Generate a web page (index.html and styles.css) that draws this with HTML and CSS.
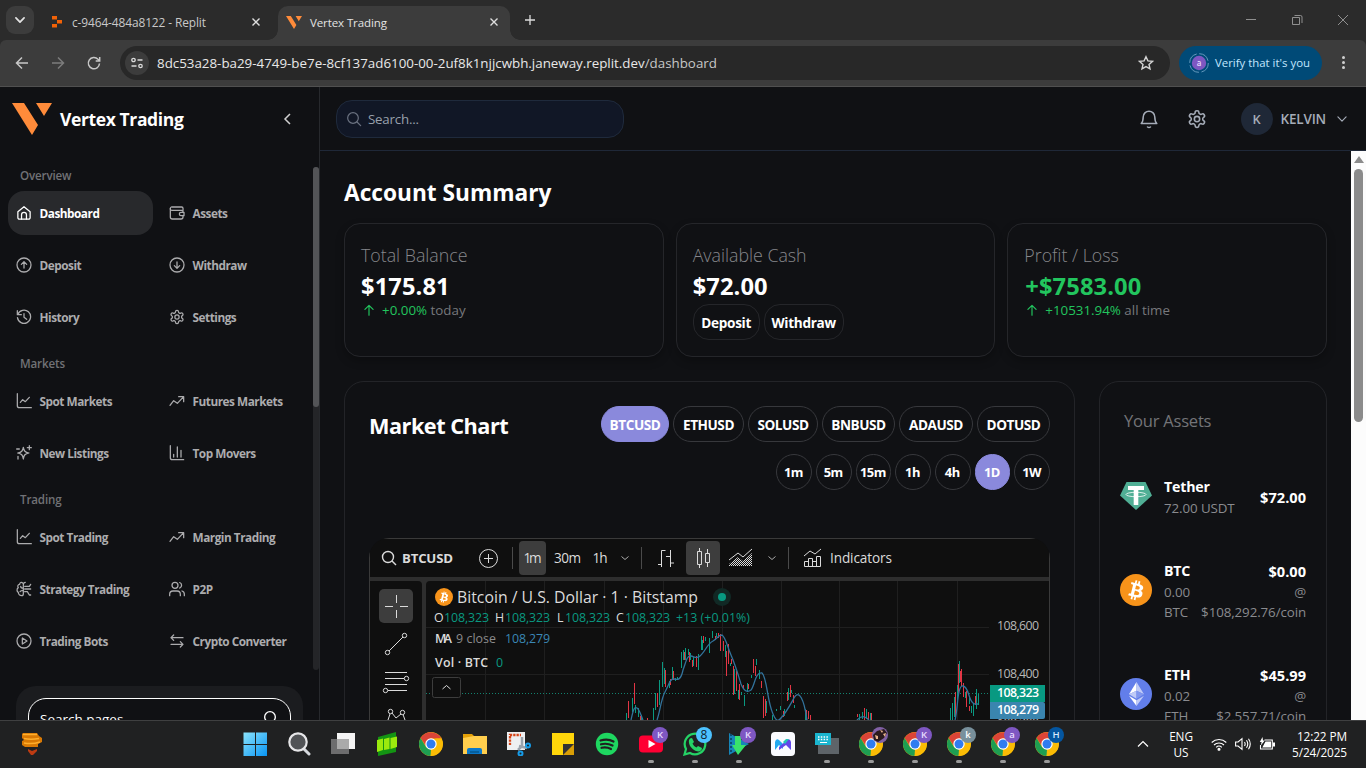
FILE: index.html
```html
<!DOCTYPE html>
<html lang="en">
<head>
<meta charset="utf-8">
<title>Vertex Trading</title>
<link rel="stylesheet" href="styles.css">
</head>
<body>
<svg class="defs" width="0" height="0">
  <defs><pattern id="dots" width="2" height="2" patternUnits="userSpaceOnUse"><path fill="#dbdbdb" d="M0 0h1v1H0zM1 1h1v1H1z"/></pattern></defs>
  <symbol id="home" viewBox="0 0 24 24"><path d="M2.800 10.200 12 2.500l9.200 7.700V19a2.300 2.300 0 0 1-2.300 2.300H5.100A2.300 2.300 0 0 1 2.800 19z"/><path d="M8.300 21v-6.200a3.700 3.700 0 0 1 7.400 0V21"/></symbol>
  <symbol id="wallet" viewBox="0 0 24 24"><path d="M21 8V5a2 2 0 0 0-2-2H4.500A2.200 2.200 0 0 0 2 5.200V18a3 3 0 0 0 3 3h13a3 3 0 0 0 3-3v-2"/><path d="M2 5.500A2.300 2.300 0 0 0 4.500 8H19a2 2 0 0 1 2 2v1"/><path d="M22.500 11H18a2.500 2.500 0 0 0 0 5h4.500z"/></symbol>
  <symbol id="up-circle" viewBox="0 0 24 24"><circle cx="12" cy="12" r="10.500"/><path d="M12 16.500v-9M8 11l4-4 4 4"/></symbol>
  <symbol id="down-circle" viewBox="0 0 24 24"><circle cx="12" cy="12" r="10.500"/><path d="M12 7.500v9M8 13l4 4 4-4"/></symbol>
  <symbol id="history" viewBox="0 0 24 24"><path d="M2 2.500v6h6"/><path d="M2.800 8A9.900 9.900 0 1 1 2.200 13"/><path d="M12 7v5.500l4 3"/></symbol>
  <symbol id="gear" viewBox="0 0 24 24"><path d="M12.220 2h-.44a2 2 0 0 0-2 2v.18a2 2 0 0 1-1 1.730l-.43.25a2 2 0 0 1-2 0l-.15-.08a2 2 0 0 0-2.730.73l-.22.38a2 2 0 0 0 .73 2.730l.15.1a2 2 0 0 1 1 1.720v.51a2 2 0 0 1-1 1.740l-.15.09a2 2 0 0 0-.73 2.730l.22.38a2 2 0 0 0 2.730.73l.15-.08a2 2 0 0 1 2 0l.43.25a2 2 0 0 1 1 1.730V20a2 2 0 0 0 2 2h.44a2 2 0 0 0 2-2v-.18a2 2 0 0 1 1-1.730l.43-.25a2 2 0 0 1 2 0l.15.08a2 2 0 0 0 2.730-.73l.22-.39a2 2 0 0 0-.73-2.730l-.15-.08a2 2 0 0 1-1-1.740v-.5a2 2 0 0 1 1-1.740l.15-.09a2 2 0 0 0 .73-2.730l-.22-.38a2 2 0 0 0-2.730-.73l-.15.08a2 2 0 0 1-2 0l-.43-.25a2 2 0 0 1-1-1.730V4a2 2 0 0 0-2-2z"/><circle cx="12" cy="12" r="3.200"/></symbol>
  <symbol id="line-chart" viewBox="0 0 24 24"><path d="M2 1v18a3 3 0 0 0 3 3h18M6.500 14l3.500-4 4 3 6-6.500"/></symbol>
  <symbol id="trend" viewBox="0 0 24 24"><path d="M1.500 18.500 7 11.500l5.500 4L22 5.500M14.500 5.500H22V13"/></symbol>
  <symbol id="sparkle" viewBox="0 0 24 24"><path d="M11 3.500c.9 5.500 2.500 7.400 8.500 8.500-6 1.100-7.600 3-8.500 9-.9-6-2.500-7.900-8.500-9 6-1.100 7.600-3 8.500-8.500zM20 1v6M17 4h6M3 17v4M1 6h4"/></symbol>
  <symbol id="bars" viewBox="0 0 24 24"><path d="M2 1v18a3 3 0 0 0 3 3h17M7 14v4M12.500 3v15M18 8v10"/></symbol>
  <symbol id="brain" viewBox="0 0 24 24"><path d="M10 3C8 .8 5.500 2.500 5.500 5 2.500 5 2 8.500 3.500 10 .8 11.500 1 16 3.500 17c0 3 2.500 5 5 5 2 0 2.500-1.500 2.500-3V6c0-2 1-4 3-4M7 8c0 2 1.500 3 4 3M6 16c1-2 3-2 5-2M13 8h7l2-3M13 12h9M13 16h4l3 5h2"/></symbol>
  <symbol id="users" viewBox="0 0 24 24"><circle cx="9" cy="6.500" r="4.500"/><path d="M1 22v-2a5 5 0 0 1 5-5h6a5 5 0 0 1 5 5v2M16 2.300a4.500 4.500 0 0 1 0 8.400M19.500 15a5 5 0 0 1 3.500 5v2"/></symbol>
  <symbol id="play-circle" viewBox="0 0 24 24"><circle cx="12" cy="12" r="10.500"/><path d="M9.500 7.500v9l7-4.500z"/></symbol>
  <symbol id="swap" viewBox="0 0 24 24"><path d="M21 7H3M7 3 3 7l4 4M3 17h18M17 13l4 4-4 4"/></symbol>
  <symbol id="search" viewBox="0 0 24 24"><circle cx="10.500" cy="10.500" r="8"/><path d="m16.500 16.500 5.500 5.500"/></symbol>
  <symbol id="chev-down" viewBox="0 0 24 24"><path d="m5 8.500 7 7 7-7"/></symbol>
  <symbol id="arrow-up" viewBox="0 0 24 24"><path d="M12 21V4M5 11l7-7 7 7"/></symbol>
  <symbol id="vertex" viewBox="0 0 40 32"><path fill="#ff8b3a" d="M0 0h12l14 22-6 10zM24 0h16l-8 13z"/></symbol>
  <symbol id="bitcoin" viewBox="0 0 32 32"><circle cx="16" cy="16" r="16" fill="#f7931a"/><path fill="#fff" fill-rule="evenodd" d="M23.200 14.200c.3-2.100-1.300-3.200-3.500-4l.7-2.800-1.700-.4-.7 2.700-1.400-.3.700-2.800-1.700-.4-.7 2.800-3.400-.9-.5 1.900s1.300.3 1.200.3c.7.2.8.6.8 1l-2 7.900c-.1.200-.3.500-.8.400l-1.200-.3-.9 2 3.200.8-.7 2.900 1.700.4.7-2.800 1.400.4-.7 2.800 1.700.4.7-2.900c3 .6 5.200.3 6.100-2.300.8-2.200 0-3.400-1.600-4.200 1.100-.3 2-1 2.600-2.600zm-4 5.600c-.5 2.200-4.200 1-5.300.7l1-3.800c1.200.3 5 .9 4.300 3.100zm.5-5.600c-.5 2-3.500 1-4.500.7l.9-3.400c1 .2 4.200.7 3.600 2.700z"/></symbol>
  <symbol id="chrome" viewBox="0 0 24 24"><circle cx="12" cy="12" r="12" fill="#fbbc05"/><path fill="#db4437" d="M1.600 6A12 12 0 0 1 22.400 6.500H12L7 14z"/><path fill="#1e9e52" d="M1.600 6 7 15l5 2.500L11.500 24A12 12 0 0 1 1.600 6z"/><path fill="#fbbc05" d="M22.400 6.500A12 12 0 0 1 11.500 24L17 14l-.5-7.500z"/><circle cx="12" cy="12" r="5.700" fill="#fff"/><circle cx="12" cy="12" r="4.500" fill="#2f7cf0"/></symbol>
</svg>

<div class="window">
  <header class="tabstrip">
    <div class="tab-menu"><svg class="ico s14 w3"><use href="#chev-down"/></svg></div>
    <div class="tab">
      <svg class="fav" viewBox="0 0 12 12"><path fill="#f26207" d="M1 0h5v3.500H1zM6 4h5v3.500H6zM1 8h5v3.500H1z"/></svg>
      <span class="tab-title">c-9464-484a8122 - Replit</span><svg class="tab-x" viewBox="0 0 10 10"><path d="M1.500 1.500l7 7M8.500 1.500l-7 7"/></svg>
    </div>
    <div class="tab active">
      <svg class="fav vfav"><use href="#vertex"/></svg>
      <span class="tab-title">Vertex Trading</span><svg class="tab-x" viewBox="0 0 10 10"><path d="M1.500 1.500l7 7M8.500 1.500l-7 7"/></svg>
    </div>
    <svg class="new-tab" viewBox="0 0 12 12"><path d="M6 1v10M1 6h10"/></svg>
    <div class="win-controls">
      <svg viewBox="0 0 12 12"><path d="M1 5.500h10"/></svg>
      <svg viewBox="0 0 12 12"><path d="M1.500 3.500h7v7h-7zM3.500 1.500h6a1.500 1.500 0 0 1 1.500 1.500v6"/></svg>
      <svg viewBox="0 0 12 12"><path d="M1 1l10 10M11 1 1 11"/></svg>
    </div>
  </header>

  <div class="toolbar-bed">
  <div class="toolbar">
    <svg class="tb-ico" viewBox="0 0 16 16"><path d="M14 8H2.500M8 2.500 2.500 8 8 13.500"/></svg>
    <svg class="tb-ico dim" viewBox="0 0 16 16"><path d="M2 8h11.500M8 2.500 13.500 8 8 13.500"/></svg>
    <svg class="tb-ico" viewBox="0 0 16 16"><path d="M13.500 8.500A5.600 5.600 0 1 1 12 4.300l1.500 1.500M13.700 2v4h-4"/></svg>
    <div class="omnibox">
      <div class="site"><svg viewBox="0 0 14 14"><circle cx="3.500" cy="4" r="1.700"/><path d="M7.500 4h5M1.500 10h5"/><circle cx="10.500" cy="10" r="1.700"/></svg></div>
      <span class="url">8dc53a28-ba29-4749-be7e-8cf137ad6100-00-2uf8k1njjcwbh.janeway.replit.dev<i>/dashboard</i></span>
      <svg class="star" viewBox="0 0 16 16"><path d="m8 1.700 1.900 4.200 4.500.5-3.400 3 1 4.500L8 11.600l-4 2.300 1-4.500-3.400-3 4.500-.5z"/></svg>
    </div>
    <div class="verify"><svg viewBox="0 0 20 20"><circle cx="10" cy="10" r="9.300" fill="none" stroke="#6da0c4" stroke-width=".9" stroke-dasharray="12 2.600"/><circle cx="10" cy="10" r="7.200" fill="#7e57c2"/><text x="10" y="12.500" text-anchor="middle">a</text></svg><span>Verify that it's you</span></div>
    <div class="kebab"><b></b><b></b><b></b></div>
  </div>
  </div>

  <div class="page">
    <aside class="sidebar">
      <div class="brand"><svg class="logo"><use href="#vertex"/></svg><h1>Vertex Trading</h1><svg class="collapse" viewBox="0 0 12 14"><path d="M9 2 4 7l5 5"/></svg></div>
      <div class="nav-wrap">
        <nav>
          <h2>Overview</h2>
          <div class="links">
            <a class="on"><svg class="ico"><use href="#home"/></svg>Dashboard</a><a><svg class="ico"><use href="#wallet"/></svg>Assets</a>
            <a><svg class="ico"><use href="#up-circle"/></svg>Deposit</a><a><svg class="ico"><use href="#down-circle"/></svg>Withdraw</a>
            <a><svg class="ico"><use href="#history"/></svg>History</a><a><svg class="ico"><use href="#gear"/></svg>Settings</a>
          </div>
          <h2>Markets</h2>
          <div class="links">
            <a><svg class="ico"><use href="#line-chart"/></svg>Spot Markets</a><a><svg class="ico"><use href="#trend"/></svg>Futures Markets</a>
            <a><svg class="ico"><use href="#sparkle"/></svg>New Listings</a><a><svg class="ico"><use href="#bars"/></svg>Top Movers</a>
          </div>
          <h2>Trading</h2>
          <div class="links">
            <a><svg class="ico"><use href="#line-chart"/></svg>Spot Trading</a><a><svg class="ico"><use href="#trend"/></svg>Margin Trading</a>
            <a><svg class="ico"><use href="#brain"/></svg>Strategy Trading</a><a><svg class="ico"><use href="#users"/></svg>P2P</a>
            <a><svg class="ico"><use href="#play-circle"/></svg>Trading Bots</a><a><svg class="ico"><use href="#swap"/></svg>Crypto Converter</a>
          </div>
        </nav>
        <div class="nav-scroll"><div></div></div>
      </div>
      <div class="page-search"><div><span>Search pages...</span><svg class="ico"><use href="#search"/></svg></div></div>
    </aside>

    <main>
      <div class="topbar">
        <div class="search"><svg class="ico"><use href="#search"/></svg><span>Search...</span></div>
        <div class="user-tools">
          <svg class="bell" viewBox="0 0 20 20"><path d="M2.200 14.500c1.800-1.700 2-3.500 2-6.500a5.800 5.800 0 0 1 11.600 0c0 3 .2 4.800 2 6.500zM8.500 18q1.500 1 3 0"/></svg>
          <svg class="ico cog"><use href="#gear"/></svg>
          <div class="avatar">K</div><span class="name">KELVIN</span><svg class="ico s14"><use href="#chev-down"/></svg>
        </div>
      </div>
      <div class="scroller">
        <div class="content">
          <h2 class="title">Account Summary</h2>
          <section class="stats">
            <article><h3>Total Balance</h3><strong>$175.81</strong><p><svg class="ico s14"><use href="#arrow-up"/></svg><em>+0.00%</em> today</p></article>
            <article><h3>Available Cash</h3><strong>$72.00</strong><div class="actions"><button class="dep">Deposit</button><button class="wd">Withdraw</button></div></article>
            <article><h3>Profit / Loss</h3><strong class="gain">+$7583.00</strong><p><svg class="ico s14"><use href="#arrow-up"/></svg><em>+10531.94%</em> all time</p></article>
          </section>
          <div class="panels">
            <section class="chart-card">
              <div class="chart-head">
                <h3>Market Chart</h3>
                <div class="filters">
                  <div class="pairs"><button class="sel">BTCUSD</button><button>ETHUSD</button><button>SOLUSD</button><button>BNBUSD</button><button>ADAUSD</button><button>DOTUSD</button></div>
                  <div class="spans"><button>1m</button><button>5m</button><button>15m</button><button>1h</button><button>4h</button><button class="sel">1D</button><button>1W</button></div>
                </div>
              </div>
              <div class="tv"><div class="tv-frame">
                <svg class="tv-top" viewBox="370 539 679 38">
                  <g class="st"><circle cx="388" cy="557" r="5.500" stroke-width="1.400"/><path stroke-width="1.400" d="m392 561 4 4"/><circle cx="488.500" cy="558.500" r="9"/><path d="M484 558.500h9M488.500 554v9"/></g>
                  <rect x="519" y="541" width="27" height="34" rx="4" fill="#3d3d3d"/><rect x="686" y="541" width="34" height="34" rx="4" fill="#3d3d3d"/>
                  <path stroke="#4a4a4a" d="M512.500 547v22M641.500 547v22M788.500 547v22"/>
                  <text x="402" y="563" textLength="51" class="bold">BTCUSD</text>
                  <text x="523.500" y="563" textLength="18">1m</text><text x="554" y="563" textLength="27">30m</text><text x="592.500" y="563" textLength="15">1h</text>
                  <text x="830" y="563" textLength="62">Indicators</text>
                  <g class="st"><path stroke="#aaa" d="m621.500 556.500 3.500 3 3.500-3M768.500 556.500l3.500 3 3.500-3"/>
                  <path d="M658 564.500h3.500M661.500 567v-16.500h4M670.500 567v-17M666 556.500h4M671 563h3"/>
                  <path d="M699.500 548v3M699.500 565v3M697.500 551.500h4v13h-4zM707.500 549v4M707.500 563v4M705.500 553.500h4v9h-4z"/>
                  <path d="m729 560 9-7 5 4 9-8M804 556l6-5 5 3 6-5M804.500 566.500v-5h4v5zM808.500 566.500v-8h4v8M812.500 561.500h4v5M816.500 566.500v-10h4v10h-12"/></g>
                  <path fill="url(#dots)" d="m729 564 9-7 5 4 9-8v13h-23z"/>
                </svg>
                <div class="tv-body">
                  <svg class="tools" viewBox="370 581 52 139">
                    <rect x="379" y="589" width="34" height="34" rx="5" fill="#3d3d3d"/>
                    <g class="st"><path d="M396.500 595v8M396.500 610v8M385 606.500h8M400 606.500h8M389 651l14-14"/><circle cx="387.500" cy="652.500" r="2.200"/><circle cx="404.500" cy="635.500" r="2.200"/>
                    <path d="M385 672.500h22M385 678.500h19M385 684.500h22M388 690.500h19"/><circle cx="406.500" cy="678.500" r="2.200"/><circle cx="385.500" cy="690.500" r="2.200"/>
                    <circle cx="390.500" cy="711.500" r="2.200"/><circle cx="402.500" cy="712.500" r="2.200"/><path d="m390 714-2 6M392 713l4 5 5-4M403 714.500l2 5.500"/></g>
                  </svg>
                  <svg class="canvas" viewBox="426 581 623 139">
                    <path stroke="#1f1f1f" d="M485.500 581v139M544.500 581v139M604.500 581v139M663.500 581v139M722.500 581v139M781.500 581v139M839.500 581v139M897.500 581v139M957.500 581v139M426 627.500h563M426 674.500h563"/>
                    <path stroke="#12826f" stroke-dasharray="1 2" d="M426 693.500h564"/>
                    <path class="up" d="M626.500 713v7M632.500 698v14M635.500 705v8M638.500 708v9M641.500 715v5M653.500 708v12M655.500 693v17M659.500 680v25M662.500 662v25M664.500 668v16M669.500 681v7M672.500 667v12M675.500 678v3M677.500 677v2M681.500 652v16M683.500 650v10M685.500 648v12M688.500 649v6M690.500 653v7M693.500 657v9M698.500 654v16M701.500 636v14M702.500 640v10M705.500 637v4M709.500 638v15M712.500 631v7M716.500 633v4M725.500 645v12M730.500 663v3M734.500 669v25M738.500 690v9M741.500 692v3M744.500 695v11M747.500 683v9M751.500 675v3M756.500 659v6M759.500 670v9M766.500 701v12M772.500 715v5M776.500 709v2M780.500 706v4M784.500 709v7M788.500 688v12M791.500 690v3M794.500 705v3M805.500 709v11M859.500 714v6M862.500 712v7M866.500 709v10M870.500 713v7M950.500 708v12M952.500 703v17M954.500 697v20M957.500 685v15M959.500 661v22M965.500 692v6M969.500 696v8M971.500 706v7M973.500 704v12M976.500 689v20M978.500 694v11"/>
                    <path class="down" d="M628.500 701v17M634.500 683v21M640.500 716v4M647.500 718v2M657.500 693v14M665.500 670v17M670.500 679v6M673.500 671v9M684.500 652v8M689.500 652v10M692.500 660v7M696.500 656v11M703.500 636v7M715.500 636v4M718.500 633v5M720.500 634v17M723.500 641v10M726.500 651v25M728.500 644v20M731.500 659v5M733.500 666v29M736.500 671v20M739.500 684v16M743.500 685v4M748.500 684v5M753.500 659v14M755.500 666v10M761.500 681v7M763.500 696v22M765.500 699v17M783.500 711v6M787.500 692v9M790.500 685v12M793.500 695v8M806.500 710v10M808.500 711v8M810.500 715v5M857.500 714v3M864.500 708v12M868.500 712v8M871.500 713v7M955.500 692v26M958.500 664v30M960.500 671v11M961.500 669v17M963.500 683v14M966.500 691v16M969.500 706v5M975.500 696v9"/>
                    <path class="ma" d="M631 720c2-9 3-14 6-12s4 8 6 12M657 720c3-8 4-21 8-28s5-14 9-13 7 1 9-9c3-8 4-15 8-14s6 3 9 0c5-4 7-12 13-15 5-3 5-6 9-6 4 3 5 11 9 20s7 19 10 29c3 7 6 9 10 6 4-5 4-18 11-17 5 4 5 28 11 41 3 7 5 8 8 4 5-5 8-11 13-20 5-9 10 1 13 22M857 720c4-4 7-5 12 0M955 720c3-10 2-35 8-34 6 1 5 13 10 17 2 2 3 1 5 1"/>
                    <rect x="432.500" y="677.500" width="28" height="20" rx="2" fill="#0f0f0f" stroke="#3d3d3d"/><path class="st2" d="m442.500 689 4-3.500 4 3.500"/>
                    <svg x="435" y="588" width="18" height="18"><use href="#bitcoin"/></svg>
                    <text class="big" x="457" y="603" textLength="241">Bitcoin / U.S. Dollar · 1 · Bitstamp</text>
                    <circle cx="722" cy="597" r="9" fill="#112925"/><circle cx="722" cy="597" r="4" fill="#089981"/>
                    <g class="sm"><text x="434" y="622" textLength="9">O</text><text class="g" x="444" y="622" textLength="45">108,323</text><text x="495" y="622" textLength="9">H</text><text class="g" x="505" y="622" textLength="45">108,323</text><text x="557" y="622" textLength="7">L</text><text class="g" x="565" y="622" textLength="45">108,323</text><text x="616" y="622" textLength="8">C</text><text class="g" x="625" y="622" textLength="45">108,323</text><text class="g" x="676" y="622" textLength="74">+13 (+0.01%)</text>
                    <text x="435" y="643" textLength="17" class="semi">MA</text><text x="456" y="643" textLength="40" class="dim">9 close</text><text x="505" y="643" textLength="45" class="blue">108,279</text>
                    <text x="435" y="667" textLength="53" class="semi">Vol · BTC</text><text x="496" y="667" class="g">0</text>
                    <text x="997" y="630" textLength="42" class="axis">108,600</text><text x="997" y="678" textLength="42" class="axis">108,400</text><text x="997" y="727" textLength="42" class="axis">108,200</text></g>
                    <path fill="#089981" d="M990 685h55v17h-55z"/><path fill="#3a85ae" d="M990 702h53a2 2 0 0 1 2 2v13a2 2 0 0 1-2 2h-53z"/>
                    <g class="sm white"><text x="997" y="697" textLength="42">108,323</text><text x="997" y="714" textLength="42">108,279</text></g>
                  </svg>
                </div>
              </div></div>
            </section>
            <section class="assets">
              <h3>Your Assets</h3>
              <div class="asset first"><svg viewBox="0 0 32 32"><path fill="#50af95" d="M6.500 2h19L32 15.500 16 30 0 15.500z"/><path fill="#fff" d="M8 6h16v4h-5.700v15h-4.600V10H8z"/><ellipse cx="16" cy="14.500" rx="10" ry="2.200" fill="none" stroke="#fff" stroke-width=".8"/></svg><div><b>Tether</b><span>72.00 USDT</span></div><div class="r"><b>$72.00</b></div></div>
              <div class="asset"><svg><use href="#bitcoin"/></svg><div><b>BTC</b><span>0.00</span><span>BTC</span></div><div class="r"><b>$0.00</b><span>@</span><span class="coin">$108,292.76/coin</span></div></div>
              <div class="asset"><svg viewBox="0 0 32 32"><circle cx="16" cy="16" r="16" fill="#627eea"/><path fill="#fff" d="m16.500 4-7.500 12.200 7.500-3.400z"/><path fill="#c0cbf7" d="m16.500 4 7.500 12.200-7.500-3.400zM9 16.200l7.500-3.400v7.900z"/><path fill="#8197ee" d="m16.500 12.800 7.500 3.400-7.500 4.500z"/><path fill="#fff" d="m9 17.800 7.500 4.500V28z"/><path fill="#c0cbf7" d="m24 17.800-7.500 4.500V28z"/></svg><div><b>ETH</b><span>0.02</span><span>ETH</span></div><div class="r"><b>$45.99</b><span>@</span><span class="coin">$2,557.71/coin</span></div></div>
            </section>
          </div>
        </div>
        <div class="vscroll"><i></i><div></div></div>
      </div>
    </main>
  </div>

  <footer class="taskbar">
    <div class="widget"><svg viewBox="0 0 24 24"><path fill="#d97904" d="M3 1h14l2 3 3 2v4l-4 2v3H5l-3-2v-4l2-1-2-2V2z"/><path stroke="#ffae2b" fill="none" stroke-width="1.500" d="M3 2.500h14M4 6.500c5 1 9 1 15 0M4 11c5 1 10 1 16-1"/><path fill="#bd3b12" d="m8 17 4 2 5-2v2l-4 4h-2l-3-4z"/></svg></div>
    <div class="apps">
      <div><svg viewBox="0 0 24 24"><defs><linearGradient id="wg" x2="1" y2="1"><stop stop-color="#8be3fb"/><stop offset="1" stop-color="#0895f5"/></linearGradient></defs><path fill="url(#wg)" d="M.5.5H12V12H.5zM13 .5h11V12H13zM.5 13H12v11H.5zM13 13h11v11H13z"/></svg></div>
      <div><svg viewBox="0 0 24 24"><path stroke="#d6d9de" stroke-width="3" stroke-linecap="round" d="m17 17 5 5"/><circle cx="11" cy="10" r="8.700" fill="#515356" stroke="#e6e6e8" stroke-width="2.200"/></svg></div>
      <div><svg viewBox="0 0 24 24"><path fill="#f4f4f4" d="M6 1h18v16H6z"/><path fill="#6d6d6e" d="M0 7h18v15H0z"/><path fill="#aaa" d="M6 7h12v10H6z"/></svg></div>
      <div><svg viewBox="0 0 24 24"><path fill="#139413" d="M3 5 21 0v20L3 24z"/><path fill="#9bea0e" d="m2 8 6-1.500V18l-6 2zM9 7l5.500-1.500V17L9 18zM15.500 6 22 4.500V15l-6.500 2z"/></svg></div>
      <div><svg><use href="#chrome"/></svg></div>
      <div><svg viewBox="0 0 24 24"><path fill="#e3a008" d="M0 2h9l3 3v3H0z"/><path fill="#ffce4d" d="M0 6l11-2h13v18H0z"/><path fill="#0b78c8" d="M4 22v-4a2 2 0 0 1 2-2h11a2 2 0 0 1 2 2v4z"/><path fill="#065f9d" d="M7 19h9v2H7z"/></svg></div>
      <div><svg viewBox="0 0 24 24"><path fill="#eef0f2" d="M0 0h18v18H0z"/><path stroke="#d64519" stroke-width="2.300" stroke-dasharray="2.300 1" fill="none" d="M3 13V3h11"/><path stroke="#9aa3ad" stroke-width="2.500" fill="none" d="M15 5v9l-4 4M12 14l8 2"/><g fill="none" stroke="#169ce8" stroke-width="2"><circle cx="21" cy="13.500" r="2"/><circle cx="13.500" cy="21.500" r="2"/></g></svg></div>
      <div><svg viewBox="0 0 24 24"><path fill="#ffd60a" d="M1 1h22v22H1z"/><path fill="#d99e06" d="M12 12h11v11H12z"/><path fill="#333" d="M12 12h11L12 23z"/></svg></div>
      <div><svg viewBox="0 0 24 24"><circle cx="12" cy="12" r="11.200" fill="#1ed760"/><path fill="none" stroke="#202020" stroke-width="2.200" stroke-linecap="round" d="M5.500 8.500c4-1.300 9.500-1 13 1M6 12.300c4-1 8-.5 11.500 1.200M6.500 15.800c3.500-.8 6.500-.4 9.500 1.200"/></svg></div>
      <div class="run"><svg viewBox="0 0 24 24"><rect y="3.500" width="24" height="17" rx="4" fill="#ff0033"/><path fill="#fff" d="m9.500 8 7 4-7 4z"/></svg><em class="b p">K</em></div>
      <div class="run"><svg viewBox="0 0 24 24"><path fill="none" stroke="#25d366" stroke-width="2.200" d="M1.500 22.500 3 17A10.300 10.300 0 1 1 7 21z"/><path fill="#25d366" d="M7 6.500 9 6l2 4-1.500 1.500c1 2 2 3 4 4L15 14l4 2c0 3-3 4-6 3-4-2-8-6-7-11z"/></svg><em class="b n">8</em></div>
      <div class="run"><svg viewBox="0 0 24 24"><path fill="#1685b8" d="m2 1 20 11L2 23z"/><path stroke="#0e4d73" stroke-dasharray="2 2" stroke-width="2" d="M4 2v20"/><path fill="#38e36c" d="M8 4h6v9h5l-8 10-6-10h3z"/></svg><em class="b p">K</em></div>
      <div><svg viewBox="0 0 24 24"><rect width="24" height="24" rx="4" fill="#fafbff"/><path fill="#23a9ef" d="M4 18v-8q1-4 4-2l4 4v5l-4-4z"/><path fill="#6248ea" d="M20 18v-8q-1-4-4-2l-8 7v3l7-5z"/><path fill="#23c7b5" d="m12 10 3-3h3l-4 5z"/></svg></div>
      <div class="run"><svg viewBox="0 0 24 24"><path fill="#5e6469" d="M3 6h21v16H3z"/><path fill="#1ab5cf" d="M0 1h16v12H0z"/><path stroke="#fff" stroke-width="1.500" stroke-dasharray="1.500 1.300" d="M3 5h11M3 7.500h11"/><path stroke="#fff" d="M5 10.500h7"/></svg></div>
      <div class="run"><svg><use href="#chrome"/></svg><em class="b photo"><svg viewBox="0 0 16 16"><path fill="#2b1a1d" d="m1 8 4-4 7-2 3 4-3 5-6 4-4-2z"/><path fill="#e8b48c" d="m3 8 3 1v3H4zM8 3l3 1-1 2zM11 7l3-1-1 4z"/></svg></em></div>
      <div class="run"><svg><use href="#chrome"/></svg><em class="b p">K</em></div>
      <div class="run"><svg><use href="#chrome"/></svg><em class="b s">k</em></div>
      <div class="run"><svg><use href="#chrome"/></svg><em class="b p">a</em></div>
      <div class="run"><svg><use href="#chrome"/></svg><em class="b h">H</em></div>
    </div>
    <div class="tray">
      <svg class="t-chev" viewBox="0 0 12 12"><path d="m1 8.500 5-5 5 5"/></svg>
      <div class="lang">ENG<br>US</div>
      <svg class="t16" viewBox="0 0 16 16"><path d="M.7 6.500a10.500 10.500 0 0 1 14.600 0M3 9a7.200 7.200 0 0 1 10 0M5.200 11.300a4 4 0 0 1 5.600 0"/><circle cx="8" cy="13.300" r="1" fill="#fff"/></svg>
      <svg class="t16" viewBox="0 0 16 16"><path d="M.6 6v4h2.500L7 13.300V2.700L3.100 6zM9.500 6q1.300 2 0 4M11.500 4.300q2.500 3.700 0 7.400M13.500 2.700q3.500 5.300 0 10.600"/></svg>
      <svg class="t16" viewBox="0 0 16 16"><path d="M5.500 4h7.800v9H1.500V9"/><path fill="#fff" stroke="none" d="M6.500 5.500H12v6H3.300zM14 6.500h2v4h-2zM3.500 1 .8 6h1.800L1.800 9.500l4-5H4z"/></svg>
      <div class="clock">12:22 PM<br>5/24/2025</div>
    </div>
  </footer>
</div>
</body>
</html>
```
FILE: styles.css
```css
* { box-sizing: border-box; }
body { margin: 0; background: #101114; color: #fff; font-family: "Open Sans", "Noto Sans", sans-serif; overflow: hidden; }
h1, h2, h3, p { margin: 0; }
svg { display: block; flex: none; fill: none; }
i, em { font-style: normal; }
button { font-family: inherit; color: inherit; margin: 0; padding: 0; background: none; }
.defs { position: absolute; }
.ico { width: 16px; height: 16px; stroke: currentColor; stroke-width: 2; stroke-linecap: round; stroke-linejoin: round; }
.s14 { width: 14px; height: 14px; }
.w3 { stroke-width: 3; }
.window { width: 1366px; height: 768px; display: grid; grid-template-rows: 40px 47px 633px 48px; }

/* browser chrome */
.tabstrip { display: flex; align-items: center; background: #2b2b2b; padding-left: 6px; }
.tab-menu { width: 28px; height: 28px; border-radius: 9px; background: #3c3c3c; display: grid; place-items: center; color: #e3e3e3; }
.tab { display: flex; align-items: center; width: 232px; height: 34px; margin-top: 6px; padding: 0 11px 2px 8px; color: #c9c9c9; }
.tab:nth-child(2) { margin-left: 8px; width: 236px; padding: 0 17px 2px 7px; }
.tab.active { position: relative; background: #3c3c3c; border-radius: 10px 10px 0 0; color: #e3e3e3; }
.tab.active::before, .tab.active::after { content: ""; position: absolute; bottom: 0; width: 10px; height: 10px; }
.tab.active::before { left: -10px; background: radial-gradient(circle at 0 0, transparent 9.500px, #3c3c3c 10px); }
.tab.active::after { right: -10px; background: radial-gradient(circle at 100% 0, transparent 9.500px, #3c3c3c 10px); }
.fav { width: 12px; height: 12px; margin: 0 9px 0 2px; }
.vfav { width: 16px; height: 13px; margin: 0 8px 0 0; }
.tab-title { font-size: 11.900px; letter-spacing: -.1px; flex: 1; white-space: nowrap; }
.active .tab-title { font-size: 11.500px; }
.tab-x { width: 10px; height: 10px; stroke: #dedede; stroke-width: 1.400; }
.new-tab { width: 12px; height: 12px; margin-left: 14px; stroke: #ddd; stroke-width: 1.300; }
.win-controls { margin-left: auto; display: flex; gap: 34px; padding-right: 17px; }
.win-controls svg { width: 12px; height: 12px; stroke: #9b9b9b; stroke-width: .9; }
.toolbar-bed { background: #2b2b2b; }
.toolbar { display: flex; align-items: center; height: 47px; background: #3c3c3c; border-bottom: 1px solid #505050; padding: 0 16px 1px 14px; border-radius: 6px 6px 0 0; }
.tb-ico { width: 16px; height: 16px; margin-right: 20px; stroke: #c7c7c7; stroke-width: 1.500; }
.tb-ico.dim { stroke: #7c7c7c; }
.tb-ico:nth-child(3) { margin-right: 18px; }
.omnibox { display: flex; align-items: center; width: 1050px; height: 34px; border-radius: 17px; background: #282828; padding: 0 16px 0 5px; }
.site { width: 24px; height: 24px; border-radius: 50%; background: #3c3c3c; display: grid; place-items: center; margin-right: 8px; }
.site svg { width: 14px; height: 14px; stroke: #dadada; stroke-width: 1.300; }
.url { font-size: 13.350px; flex: 1; color: #e8e8e8; white-space: nowrap; }
.url i { color: #c7c7c7; }
.star { width: 16px; height: 16px; stroke: #d5d5d5; stroke-width: 1.400; }
.verify { display: flex; align-items: center; gap: 6px; margin-left: 9px; width: 143px; height: 34px; border-radius: 17px; background: #004a77; padding-left: 10px; color: #c2e7ff; font-size: 11.400px; white-space: nowrap; }
.verify svg { width: 20px; height: 20px; }
.verify text { fill: #e8dcff; font-size: 8px; font-weight: 600; }
.kebab { margin-left: auto; margin-right: 5px; display: grid; gap: 2px; }
.kebab b { width: 3px; height: 3px; border-radius: 50%; background: #d0d0d0; }

/* sidebar */
.page { display: grid; grid-template-columns: 320px 1fr; overflow: hidden; min-height: 0; }
.sidebar { border-right: 1px solid #27292d; overflow: hidden; height: 633px; }
.brand { display: flex; align-items: center; height: 64px; padding: 0 26px 0 12px; }
.logo { width: 40px; height: 32px; }
.brand h1 { font-size: 17.500px; font-weight: 700; letter-spacing: -.38px; margin-left: 8px; flex: 1; }
.collapse { width: 12px; height: 14px; stroke: #d0d0d0; stroke-width: 1.500; }
.nav-wrap { display: flex; height: 519px; padding-top: 8px; justify-content: space-between; }
nav { width: 298px; padding-left: 8px; }
nav h2 { height: 32px; line-height: 33px; padding-left: 12px; font-size: 11.600px; font-weight: 600; color: #717276; letter-spacing: -.15px; }
.links { display: grid; grid-template-columns: 145px 145px; gap: 8px; margin-bottom: 8px; }
.links a { display: flex; align-items: center; gap: 7.500px; height: 44px; padding-left: 8px; border-radius: 16px; font-size: 11.800px; font-weight: 700; letter-spacing: -.48px; color: #acacae; white-space: nowrap; }
.links .ico { stroke-width: 1.900; }
.links a.on { background: #28292c; color: #fff; }
.nav-scroll { width: 6px; height: 503px; margin-top: 8px; border-radius: 3px; background: #242528; }
.nav-scroll div { height: 240px; border-radius: 3px; background: #535457; }
.page-search { margin: 16px 16px 0; height: 80px; border-radius: 20px; background: #1b1c1f; padding: 12px; }
.page-search div { display: flex; justify-content: space-between; height: 42px; padding: 10px 11px; border: 1px solid #fff; border-radius: 18px; background: #101114; font-size: 13.500px; line-height: 20px; }
.page-search .ico { margin-top: 1px; }

/* top bar */
main { display: flex; flex-direction: column; min-width: 0; }
.topbar { flex: none; display: flex; align-items: center; justify-content: space-between; height: 64px; padding: 0 17px 0 16px; border-bottom: 1px solid #1f2838; }
.search { display: flex; align-items: center; gap: 6px; width: 288px; height: 38px; padding-left: 9px; border: 1px solid #1f2a3c; border-radius: 16px; background: #111726; color: #98a0ac; font-size: 13.300px; letter-spacing: -.2px; }
.search .ico { color: #6b7280; stroke-width: 1.800; }
.user-tools { display: flex; align-items: center; color: #a5acb8; }
.bell { width: 20px; height: 20px; stroke: currentColor; stroke-width: 1.500; stroke-linejoin: round; stroke-linecap: round; }
.cog { width: 20px; height: 20px; margin: 0 34px 0 28px; stroke-width: 1.900; }
.avatar { width: 32px; height: 32px; border-radius: 50%; background: #1f2837; font-size: 12.800px; font-weight: 600; display: grid; place-items: center; }
.name { font-size: 13.500px; font-weight: 600; letter-spacing: -.2px; margin: 0 9px 0 8px; }

/* content */
.scroller { display: flex; flex: 1; min-height: 0; }
.content { width: 1031px; height: 569px; padding: 24px 24px 0; overflow: hidden; }
.title { font-size: 22.700px; line-height: 36px; font-weight: 700; }
.stats { display: grid; grid-template-columns: repeat(3, 1fr); gap: 12px; margin-top: 12px; }
.stats article { height: 134px; border: 1px solid #25262a; border-radius: 16px; padding: 17px 16px; box-shadow: 0 4px 8px rgba(0,0,0,.25); }
.stats h3 { font-size: 17.800px; line-height: 28px; font-weight: 300; color: #86878b; }
.stats strong { display: block; font-size: 23.700px; line-height: 34px; font-weight: 700; letter-spacing: .1px; }
.stats .gain { color: #22c55e; padding-left: 1px; }
.stats p { display: flex; align-items: center; height: 16px; margin-top: -1px; padding-left: 1px; font-size: 13.350px; color: #77787c; white-space: pre; }
.stats p .ico { color: #22c55e; margin-right: 6px; }
.stats em { color: #22c55e; }
.actions { display: flex; gap: 4px; margin-top: 1px; }
.actions button { height: 36px; border: 1px solid #25262a; border-radius: 16px; font-size: 13.600px; font-weight: 700; letter-spacing: -.3px; }
.dep { width: 67px; }
.wd { width: 80px; }
.panels { display: grid; grid-template-columns: 731px 228px; gap: 24px; margin-top: 24px; }
.chart-card, .assets { height: 420px; border: 1px solid #232428; border-radius: 20px; padding: 24px; }
.chart-head { display: flex; justify-content: space-between; height: 132px; }
.chart-head h3 { font-size: 21.700px; font-weight: 700; line-height: 40px; letter-spacing: -.5px; white-space: nowrap; }
.filters { width: 449px; display: flex; flex-direction: column; align-items: flex-end; gap: 12px; }
.pairs { display: grid; grid-template-columns: 68px 71px 70px 73px 74px 73px; gap: 4px; }
.spans { display: grid; grid-template-columns: repeat(7, 35.700px); gap: 4px; }
.filters button { height: 36px; border: 1px solid #37383c; border-radius: 18px; font-size: 13.600px; font-weight: 700; letter-spacing: -.45px; }
.spans button { font-size: 12.900px; padding-right: 1px; }
.filters button.sel { background: #8a89dc; border-color: #8a89dc; }
.tv { width: 681px; height: 300px; border-radius: 20px; background: #0f0f0f; overflow: hidden; }
.tv-frame { height: 300px; border: 1px solid #3a3a3a; }
.tv text { fill: #dbdbdb; }
.tv-top { width: 679px; height: 38px; }
.tv-top text { font-size: 13.600px; font-weight: 500; }
.tv-top .bold { font-weight: 700; font-size: 13.200px; }
.st, .st2 { stroke: #dbdbdb; fill: none; }
.tv-body { display: grid; grid-template-columns: 52px 623px; gap: 4px; border-top: 4px solid #2e2e2e; background: #2e2e2e; }
.tools, .canvas { height: 139px; background: #0f0f0f; }
.tools { width: 52px; border-top-right-radius: 4px; }
.canvas { width: 623px; border-top-left-radius: 4px; }
.up { stroke: #0a9981; }
.down { stroke: #e33645; }
.ma { stroke: #32739c; stroke-width: 1.300; }
.canvas .big { font-size: 15.800px; font-weight: 500; }
.canvas .sm { font-size: 12.400px; }
.canvas .g { fill: #0a9981; }
.canvas .semi { font-weight: 600; }
.canvas .dim { fill: #8c8c8c; }
.canvas .blue { fill: #3a87b5; }
.canvas .axis { fill: #b8b8b8; }
.canvas .white text { fill: #fff; font-weight: 600; }
.assets { padding: 24px 20px; }
.assets h3 { font-size: 16.600px; font-weight: 500; line-height: 30px; padding-left: 4px; color: #737478; letter-spacing: -.25px; }
.asset { display: flex; align-items: center; height: 60px; margin-bottom: 44px; white-space: nowrap; }
.asset.first { height: 40px; margin: 40px 0 44px; }
.asset > svg { width: 32px; height: 32px; margin-right: 12px; }
.asset > div { display: flex; flex-direction: column; padding-top: 2px; }
.asset b { font-size: 14.200px; font-weight: 700; line-height: 22px; letter-spacing: -.2px; }
.asset span { font-size: 13.350px; line-height: 20px; color: #8a8b8f; letter-spacing: -.1px; }
.asset .r { margin-left: auto; align-items: flex-end; }
.asset .r b { font-size: 14.600px; letter-spacing: 0; }
.vscroll { width: 15px; background: #fcfcfc; display: flex; flex-direction: column; align-items: center; padding-top: 5px; }
.vscroll i { border: 5px solid transparent; border-top: 0; border-bottom: 7px solid #8b8b8b; }
.vscroll div { width: 9px; height: 253px; margin-top: 6px; border-radius: 5px; background: #8b8b8b; }

/* taskbar */
.taskbar { display: flex; background: #202122; border-top: 1px solid #3f4041; z-index: 1; }
.widget { width: 233px; padding: 11px 0 0 20px; }
.widget svg { width: 24px; height: 24px; }
.apps { display: flex; }
.apps > div { width: 44px; height: 47px; padding: 11px 10px 0; position: relative; }
.apps > div > svg { width: 24px; height: 24px; }
.run::after { content: ""; position: absolute; left: 19px; bottom: 5px; width: 6px; height: 3px; border-radius: 2px; background: #9a9a9a; }
.b { position: absolute; left: 23px; top: 6px; width: 16px; height: 16px; border-radius: 50%; font-size: 9.500px; font-weight: 600; line-height: 16px; text-align: center; }
.p { background: #7e57c2; color: #e9ddff; }
.n { background: #4cc2ff; color: #10222d; font-size: 12px; font-weight: 400; }
.s { background: #78909c; }
.h { background: #0456a0; color: #d4e9ff; }
.photo { background: #8161a6; }
.tray { flex: 1; display: flex; align-items: center; padding: 0 19px 2px 68px; font-size: 11.800px; line-height: 16px; letter-spacing: -.1px; }
.tray svg { stroke: #fff; stroke-width: 1.200; }
.t-chev { width: 12px; height: 12px; }
.lang { width: 40px; margin: 0 10px 0 12px; text-align: center; }
.t16 { width: 16px; height: 16px; margin-right: 8px; }
.tray .t16 { stroke-width: 1.100; }
.clock { margin-left: auto; text-align: right; white-space: nowrap; }
```
